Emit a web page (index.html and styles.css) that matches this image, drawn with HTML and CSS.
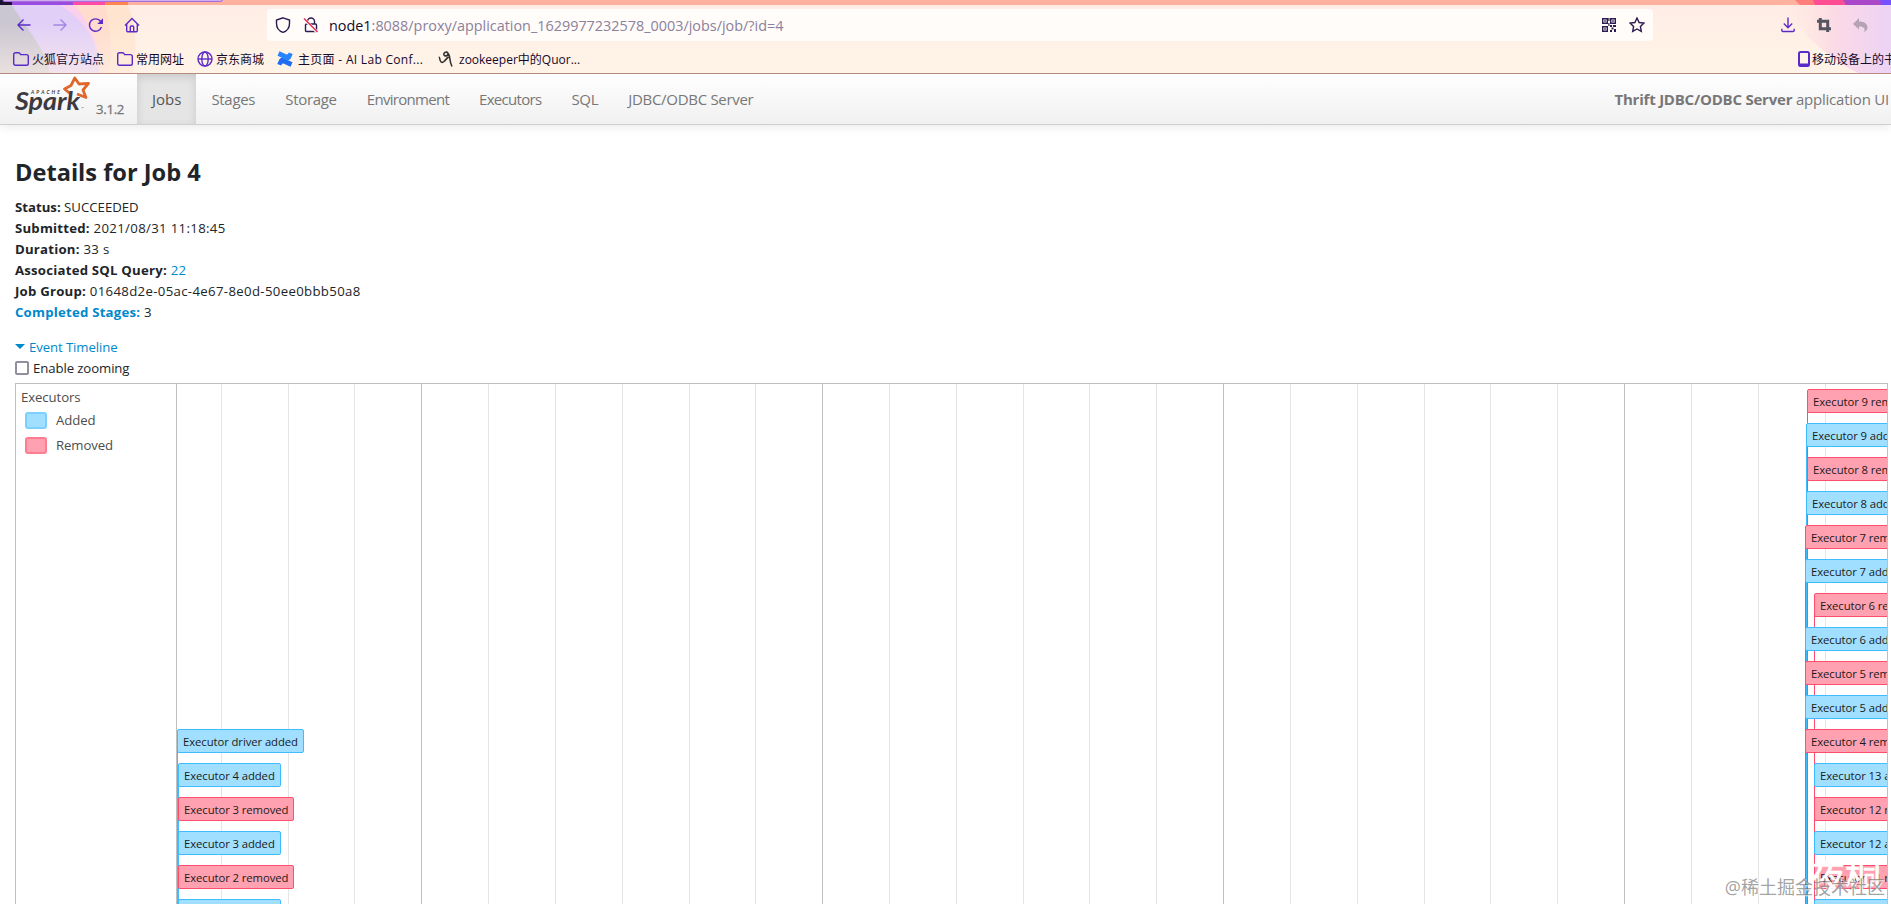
FILE: index.html
```html
<!DOCTYPE html>
<html lang="en">
<head>
  <meta charset="UTF-8" />
  <meta name="viewport" content="width=device-width, initial-scale=1.0" />
  <title>Thrift JDBC/ODBC Server - Details for Job 4</title>
  <link rel="stylesheet" href="styles.css">
</head>
<body>

<!-- browser chrome -->
<div class="chrome">
  <svg class="theme" width="1891" height="74" viewBox="0 0 1891 74">
    <defs>
      <linearGradient id="base" x1="0" y1="0" x2="0" y2="1"><stop offset="0" stop-color="#ffece6"/><stop offset="0.7" stop-color="#fff2e6"/></linearGradient>
      <linearGradient id="fade" x1="0" y1="0" x2="0" y2="1"><stop offset="0.3" stop-color="#fff2e6" stop-opacity="0"/><stop offset="1" stop-color="#fff2e6" stop-opacity="0.6"/></linearGradient>
      <linearGradient id="edge" x1="0" y1="0" x2="1" y2="0"><stop offset="0" stop-color="#ffe9dc" stop-opacity="0"/><stop offset="0.5" stop-color="#fbd9e6"/><stop offset="1" stop-color="#ecd3f5"/></linearGradient>
    </defs>
    <rect width="1891" height="74" fill="url(#base)"/>
    <path d="M0 5H128C137 28 137 54 133 74H0z" fill="#ffe5cf"/>
    <path d="M0 5H105C111 28 112 54 109 74H0z" fill="#ffdccd"/>
    <path d="M0 5H73C93 24 101 50 99 74H0z" fill="#fbd0ec"/>
    <path d="M0 5H60C88 22 101 48 99 74H0z" fill="#e2cff8"/>
    <path d="M0 5H12C24 26 46 48 50 74H0z" fill="#cac6d2"/>
    <path d="M1780 5H1891V74H1860C1822 55 1800 30 1780 5z" fill="url(#edge)"/>
    <rect width="240" height="74" fill="url(#fade)"/>
    <rect width="1891" height="5" fill="#ffb19f"/>
    <path d="M0 0H128V5H0z" fill="#ff8552"/>
    <path d="M0 0H105V5H0z" fill="#ff4aa6"/>
    <path d="M0 0H73V5H0z" fill="#9b4ce0"/>
    <path d="M0 0H12V5H0z" fill="#1d1133"/>
    <path d="M1795 0H1891V5H1800z" fill="#ff7d7b"/>
    <path d="M1813 0H1891V5H1815z" fill="#ff4d94"/>
    <path d="M1843 0H1891V5H1846z" fill="#a948c8"/>
    <path d="M1880 0H1891V5H1882z" fill="#7551ff"/>
    <path d="M3 0H222.500Q222.500 1.500 220 1.500H5Q3 1.500 3 0z" fill="#f7eefa" stroke="#a66ce0"/>
  </svg>

  <div class="toolbar">
    <div class="tools">
      <svg width="16" height="16" viewBox="0 0 16 16"><path d="M14.500 8H2M7.500 2.500L2 8l5.500 5.500"/></svg>
      <svg class="dim" width="16" height="16" viewBox="0 0 16 16"><path d="M1.500 8H14M8.500 2.500L14 8l-5.500 5.500"/></svg>
      <svg width="16" height="16" viewBox="0 0 16 16"><path d="M13.500 10A6.200 6.200 0 1 1 12.700 4.500"/><path d="M15 1.300V7H9.300z" fill="#5b2bc9" stroke="none"/></svg>
      <svg width="16" height="16" viewBox="0 0 16 16"><path d="M1 8.500L8 1.500l7 7M2.700 7v6.700q0 1 1 1h8.600q1 0 1-1V7M6.300 14.500V10q0-1 1-1h1.400q1 0 1 1v4.500"/></svg>
    </div>
    <div class="urlbar">
      <svg class="dark" width="16" height="16" viewBox="0 0 16 16"><path d="M8 .8L14.500 3v3.500C14.500 11 12 14 8 15.300 4 14 1.500 11 1.500 6.500V3z"/></svg>
      <svg class="dark lock" width="16" height="16" viewBox="0 0 16 16"><path d="M4.500 7V4.500a3.500 3.500 0 0 1 7 0V7M3.500 7h9q1 0 1 1v5.500q0 1-1 1h-9q-1 0-1-1V8q0-1 1-1z"/><path d="M1 2l13 13" stroke="#fffbf8" stroke-width="3"/><path d="M1 1.500l13.500 13.500" stroke="#e22850"/></svg>
      <span class="url"><b>node1</b>:8088/proxy/application_1629977232578_0003/jobs/job/?id=4</span>
      <svg class="dark qr" width="14" height="14" viewBox="0 0 14 14"><path d="M.7.700h4.600v4.600H.7zM8.700.700h4.600v4.600H8.700zM.7 8.700h4.600v4.600H.7z"/><path d="M2.200 2.200h1.600v1.600H2.200zM10.200 2.200h1.600v1.600h-1.600zM2.200 10.200h1.600v1.600H2.200zM8 7h2v2H8zM11 7h3v2h-3zM9.500 9.500h2v2h-2zM8 12h2v2H8zM12 11h2v3h-2zM6.300 0h1.200v3H6.300zM6.300 5h1.200v3H6.300z" fill="#2b1c50" stroke="none"/></svg>
      <svg class="dark" width="16" height="16" viewBox="0 0 16 16"><path d="M8 1l2.100 4.500 4.900.6-3.600 3.400.9 4.900L8 12l-4.300 2.400.9-4.900L1 6.100l4.900-.6z"/></svg>
    </div>
    <div class="tools right">
      <svg width="14" height="16" viewBox="0 0 14 16"><path d="M7 .5v10M2.800 6.500L7 10.700l4.200-4.200M.8 11.800v1.500q0 1.200 1.200 1.200h10q1.200 0 1.200-1.200v-1.500"/></svg>
      <svg class="crop" width="14" height="14" viewBox="0 0 14 14"><path d="M3.300 0v10.700H14M0 3.300h10.700V14"/></svg>
      <svg class="undo" width="15" height="14" viewBox="0 0 15 14"><path d="M6 0v3.500c5 0 8.500 2 8.500 6 0 2-1.500 3.700-3.500 4.500 1.500-3 .5-5.500-5-5.500v3L0 6z"/></svg>
      <svg width="16" height="16" viewBox="0 0 16 16"><path d="M1 3h14M1 8h14M1 13h14"/></svg>
    </div>
  </div>

  <div class="bookmarks">
    <svg width="16" height="14" viewBox="0 0 16 14"><path d="M.7 11.500v-9q0-1.800 1.800-1.800h3q.8 0 1.300.7l.8 1.200h5.900q1.800 0 1.800 1.800v7.100q0 1.800-1.800 1.800h-11q-1.800 0-1.800-1.800z"/></svg>
    <span class="bm bm1">火狐官方站点</span>
    <svg width="16" height="14" viewBox="0 0 16 14"><path d="M.7 11.500v-9q0-1.800 1.800-1.800h3q.8 0 1.300.7l.8 1.200h5.900q1.800 0 1.800 1.800v7.100q0 1.800-1.800 1.800h-11q-1.800 0-1.800-1.800z"/></svg>
    <span class="bm bm2">常用网址</span>
    <svg width="16" height="16" viewBox="0 0 16 16"><circle cx="8" cy="8" r="7"/><ellipse cx="8" cy="8" rx="3.200" ry="7"/><path d="M1 8h14"/></svg>
    <span class="bm bm3">京东商城</span>
    <svg class="conf" width="16" height="16" viewBox="0 0 16 16"><path d="M.3 13l2-4.500c1.500-2 3-2 5-1l8.200 3.700-2 4.500-6.500-3c-1-.4-2-.2-2.700 1.800z" fill="#1d6cf2"/><path d="M15.700 3l-2 4.500c-1.500 2-3 2-5 1L.5 4.800l2-4.500 6.500 3c1 .4 2 .2 2.700-1.800z" fill="#2684ff"/></svg>
    <span class="bm bm4">主页面 - AI Lab Conf...</span>
    <svg class="scribble" width="15" height="16" viewBox="0 0 15 16"><path d="M.8 6c.5 0 .7 0 1 2 .5 3 2 4.500 4.200 2.500C7.500 9 9 7 10.500 6M8.500 1C6 1 5 3.500 6.500 4.500S10.500 4 10 2.500 8.500 1 8.500 1c2.500 1 3 4 3.300 6.500.3 2.500.7 5 2.200 8"/></svg>
    <span class="bm bm5">zookeeper中的Quor...</span>
    <svg class="phone" width="12" height="16" viewBox="0 0 12 16"><path d="M2.500 1h7q1.500 0 1.500 1.500v11q0 1.500-1.500 1.500h-7Q1 15 1 13.500v-11Q1 1 2.500 1zM1 13.500h10"/></svg>
    <span class="bm mobile">移动设备上的书签</span>
  </div>
</div>

<!-- spark navbar -->
<div class="navbar">
  <div class="brand">
    <svg width="78" height="42" viewBox="0 0 78 42">
      <path d="M55 19.500L49.500 15l6.500-3.500L59.800 4l4.200 6 9.500-.7-5.500 6.700 3 7.500-9-3.500" fill="none" stroke="#e0672b" stroke-width="2.800" stroke-linejoin="round"/>
      <text class="apache" x="16" y="19.500" textLength="29" lengthAdjust="spacing">APACHE</text>
      <text class="spark" x="0" y="36" textLength="65" lengthAdjust="spacingAndGlyphs">Spark</text>
      <text class="tm" x="66" y="36">™</text>
    </svg>
    <span class="version">3.1.2</span>
  </div>
  <a class="nav active" href="#">Jobs</a>
  <a class="nav" href="#">Stages</a>
  <a class="nav" href="#">Storage</a>
  <a class="nav tight" href="#">Environment</a>
  <a class="nav tight" href="#">Executors</a>
  <a class="nav" href="#">SQL</a>
  <a class="nav" href="#">JDBC/ODBC Server</a>
  <p class="app-name"><strong>Thrift JDBC/ODBC Server</strong> application UI</p>
</div>

<div class="content">
  <h3>Details for Job 4</h3>
  <ul class="summary">
    <li class="status"><strong>Status:</strong> SUCCEEDED</li>
    <li><strong>Submitted:</strong> 2021/08/31 11:18:45</li>
    <li><strong>Duration:</strong> 33 s</li>
    <li><strong>Associated SQL Query:</strong> <a href="#">22</a></li>
    <li><strong>Job Group:</strong> 01648d2e-05ac-4e67-8e0d-50ee0bbb50a8</li>
    <li><a href="#"><strong>Completed Stages:</strong></a> 3</li>
  </ul>

  <a class="toggle" href="#"><span class="arrow"></span>Event Timeline</a>
  <label class="zooming"><span class="box"></span>Enable zooming</label>

  <div class="timeline">
    <div class="groups">
      <div>Executors</div>
      <div class="legend"><span class="swatch added"></span>Added</div>
      <div class="legend"><span class="swatch removed"></span>Removed</div>
    </div>
    <div class="canvas" id="canvas"></div>
  </div>
</div>

<div class="mark-back">夜桐</div>
<div class="mark">@稀土掘金技术社区</div>

<script>
  const canvas = document.getElementById("canvas");

  // [row, x, executor, added/removed]
  const events = [
    [0, 1630, "9", "removed"], [1, 1629, "9", "added"],
    [2, 1630, "8", "removed"], [3, 1629, "8", "added"],
    [4, 1628, "7", "removed"], [5, 1628, "7", "added"],
    [6, 1637, "6", "removed"], [7, 1628, "6", "added"],
    [8, 1628, "5", "removed"], [9, 1628, "5", "added"],
    [10, 1628, "4", "removed"], [11, 1637, "13", "added"],
    [12, 1637, "12", "removed"], [13, 1637, "12", "added"],
    [14, 1637, "11", "removed"], [15, 1637, "11", "added"],
    [10, 0, "driver", "added"], [11, 1, "4", "added"],
    [12, 1, "3", "removed"], [13, 1, "3", "added"],
    [14, 1, "2", "removed"], [15, 1, "2", "added"]
  ];

  function add(cls, left, top) {
    const el = document.createElement("div");
    el.className = cls;
    el.style.left = left + "px";
    if (top !== undefined) el.style.top = top + "px";
    canvas.appendChild(el);
    return el;
  }

  // grid, one major line every 6 steps
  for (let i = 0; i < 25; i++) {
    add(i % 6 === 3 ? "grid major" : "grid", Math.floor(44.2 + i * 66.83));
  }

  // stems go behind the boxes, the first one at each x stays on top
  events.slice().reverse().forEach(([row, x, id, type]) => add("stem " + type, x, row * 34 + 17));
  events.forEach(([row, x, id, type]) => {
    add("event " + type, x, row * 34 + 5).textContent = `Executor ${id} ${type}`;
  });
</script>
</body>
</html>
```
FILE: styles.css
```css
* { box-sizing: border-box; }
body { margin: 0; height: 904px; overflow: hidden; background: #fff; color: #212529; font: 13.2px/21px "Open Sans", "Noto Sans CJK SC", sans-serif; }
a { color: #0088cc; text-decoration: none; }

.chrome { position: relative; height: 74px; border-bottom: 1px solid #b98a80; overflow: hidden; }
.theme { position: absolute; left: 0; top: 0; }
.toolbar, .bookmarks { position: relative; display: flex; align-items: center; }
.toolbar { height: 32px; margin-top: 9px; }
.toolbar svg, .bookmarks svg { fill: none; stroke: #5b2bc9; stroke-width: 1.4; flex: none; }
.tools { display: flex; flex: none; align-items: center; gap: 20px; width: 267px; padding-left: 16px; }
.tools .dim { opacity: .45; }
.tools.right { width: auto; padding-left: 128px; gap: 22px; }
.toolbar .crop { stroke: #55555f; stroke-width: 3; }
.toolbar .undo { fill: #b5a3b4; stroke: none; }
.urlbar { display: flex; flex: none; align-items: center; width: 1386px; height: 32px; padding: 0 8px; background: #fffcfa; border-radius: 4px; }
.urlbar svg.dark { stroke: #2b1c50; }
.urlbar .lock { margin-left: 12px; }
.urlbar .qr { margin-right: 13px; }
.url { flex: 1; margin-left: 10px; font-size: 14.4px; color: #8b819b; white-space: pre; }
.url b { font-weight: 400; color: #15092c; }
.bookmarks { height: 32px; padding: 4px 0 0 13px; color: #15092c; font-size: 12px; white-space: nowrap; }
.bm { margin-left: 3px; flex: none; }
.bm1 { width: 85px; }
.bm2 { width: 61px; }
.bm3 { width: 61px; }
.bm4 { width: 140px; margin-left: 5px; letter-spacing: .3px; }
.bm5 { width: 1339px; margin-left: 6px; }
.bookmarks .conf { stroke: none; }
.bookmarks .scribble { stroke: #333; stroke-width: 1.6; }
.bookmarks .phone { stroke-width: 2; }
.mobile { margin-left: 2px; }

.navbar { display: flex; height: 51px; padding-left: 15px; background: linear-gradient(#fff, #f0f0f0); border-bottom: 1px solid #d0d0d0; box-shadow: 0 1px 10px rgba(0,0,0,.1); font-size: 15px; line-height: 50px; white-space: nowrap; }
.brand { display: flex; width: 122px; color: #777; font-size: 13.2px; }
.brand svg { flex: none; }
.version { padding-left: 3px; line-height: 70px; height: 50px; letter-spacing: -.3px; -webkit-text-stroke: .3px #777; }
.apache { font: italic bold 5px "Lato", sans-serif; fill: #3c3a3e; }
.spark { font: italic bold 25px "Lato", sans-serif; fill: #3c3a3e; }
.tm { font: 4px "Lato", sans-serif; fill: #777; }
.nav { padding: 0 15px; color: #777; letter-spacing: -.3px; }
.nav.active { letter-spacing: 0; color: #555; background: #e5e5e5; box-shadow: inset 0 3px 8px rgba(0,0,0,.125); }
.nav.tight { letter-spacing: -.7px; }
.app-name { margin: 0 2px 0 auto; color: #777; letter-spacing: -.22px; }

.content { padding: 28px 3px 0 15px; }
h3 { margin: 0 0 6px; font-size: 23.6px; line-height: 38px; font-weight: 700; }
.summary { list-style: none; margin: 0; padding: 0; height: 140px; letter-spacing: .34px; }
.summary strong { font-weight: 700; letter-spacing: .22px; }
.summary .status, .status strong { letter-spacing: 0; }
.toggle { display: block; height: 20px; line-height: 20px; letter-spacing: -.1px; }
.arrow { display: inline-block; margin: 0 4px 3px 0; border: 5px solid transparent; border-top-color: #0088cc; border-bottom: 0; }
.zooming { display: flex; align-items: center; height: 22px; margin-bottom: 4px; letter-spacing: -.1px; }
.box { width: 14px; height: 14px; margin-right: 4px; border: 2px solid #8f8f9d; border-radius: 2px; background: #fff; }
.timeline { display: flex; height: 540px; border: 1px solid #bfbfbf; }
.groups { width: 161px; padding: 3px 5px; border-right: 1px solid #bfbfbf; color: #4d4d4d; letter-spacing: -.1px; }
.legend { display: flex; align-items: center; height: 25px; padding-left: 4px; }
.swatch { width: 22px; height: 17px; margin-right: 9px; border: 2px solid; border-radius: 3px; }
.canvas { position: relative; flex: 1; overflow: hidden; }
.grid { position: absolute; top: 0; bottom: 0; width: 1px; background: #e5e5e5; }
.grid.major { background: #bfbfbf; }
.event { position: absolute; height: 24px; padding: 0 5px; border: 1px solid; border-radius: 2px; font-size: 11.3px; line-height: 23px; letter-spacing: -.08px; color: #1a1a1a; white-space: nowrap; }
.added { background: #a0dfff; border-color: #3fbcff; }
.removed { background: #ffa1b0; border-color: #ff4d6d; }
.stem { position: absolute; bottom: 0; width: 1px; }
.stem.added { background: #3fbcff; }
.stem.removed { background: #ff4d6d; }
.swatch.added { border-color: #7ccfff; }
.swatch.removed { border-color: #ff7c91; }

.mark, .mark-back { position: absolute; white-space: nowrap; }
.mark { right: 6px; bottom: 4px; font-size: 18px; line-height: 26px; color: rgba(110,110,110,.65); text-shadow: 1px 1px 0 rgba(255,255,255,.7); }
.mark-back { right: 10px; bottom: 8px; font-size: 36px; line-height: 36px; color: #fff; -webkit-text-stroke: .6px #fff; }
```
